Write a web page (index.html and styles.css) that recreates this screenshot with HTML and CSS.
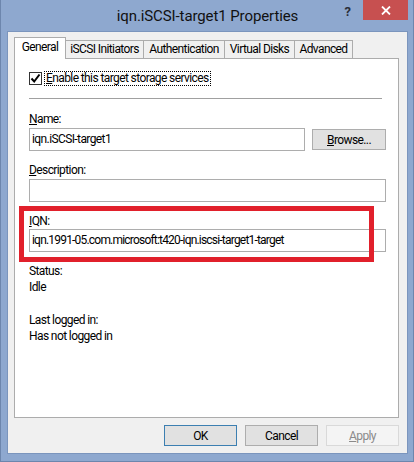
FILE: index.html
```html
<!DOCTYPE html>
<html lang="en">
<head>
  <meta charset="UTF-8" />
  <title>iqn.iSCSI-target1 Properties</title>
  <link rel="stylesheet" href="styles.css">
</head>
<body>
  <div class="window">
    <div class="titlebar">
      <span></span>
      <span class="title">iqn.iSCSI-target1 Properties</span>
      <div class="caption-buttons">
        <span class="help">?</span>
        <span class="close">
          <svg width="10" height="9" viewBox="0 0 10 9">
            <path d="M1 0.5 L9 8.5 M9 0.5 L1 8.5" stroke="#fff" stroke-width="1.8" fill="none" />
          </svg>
        </span>
      </div>
    </div>

    <div class="client">
      <!-- Abas -->
      <div class="tabs">
        <div class="tab active">General</div>
        <div class="tab w-initiators">iSCSI Initiators</div>
        <div class="tab w-auth">Authentication</div>
        <div class="tab w-disks">Virtual Disks</div>
        <div class="tab w-advanced">Advanced</div>
      </div>

      <div class="panel">
        <div class="check-row">
          <span class="checkbox">
            <svg width="11" height="11" viewBox="0 0 11 11">
              <path d="M1.5 5.5 L4.2 8.5 L9.5 1.5" stroke="#000" stroke-width="2" fill="none" />
            </svg>
          </span>
          <span class="focus-label"><u>E</u>nable this target storage services</span>
        </div>

        <div class="separator"></div>

        <div class="label first"><u>N</u>ame:</div>
        <div class="name-row">
          <div class="input name-input">iqn.iSCSI-target1</div>
          <button class="btn browse"><u>B</u>rowse...</button>
        </div>

        <div class="label"><u>D</u>escription:</div>
        <div class="input wide"></div>

        <div class="label"><u>I</u>QN:</div>
        <div class="input wide iqn">iqn.1991-05.com.microsoft:t420-iqn.iscsi-target1-target</div>

        <div class="info status">Status:</div>
        <div class="info">Idle</div>
        <div class="info last">Last logged in:</div>
        <div class="info">Has not logged in</div>

        <!-- destaque -->
        <div class="highlight"></div>
      </div>

      <div class="buttons">
        <button class="btn default">OK</button>
        <button class="btn">Cancel</button>
        <button class="btn disabled"><u>A</u>pply</button>
      </div>
    </div>
  </div>
</body>
</html>
```

FILE: styles.css
```css
body {
  margin: 0;
  font-family: Roboto, "Liberation Sans", sans-serif;
  font-size: 12px;
  letter-spacing: -0.6px;
  color: #000;
}

/* Janela */
.window {
  width: 414px;
  height: 462px;
  box-sizing: border-box;
  background: #8ea8cf;
  border: 1px solid #6d86ad;
  border-top: none;
  padding: 0 5px 7px 6px;
  display: flex;
  flex-direction: column;
}

.titlebar {
  height: 31px;
  flex-shrink: 0;
  display: grid;
  grid-template-columns: 1fr auto 1fr;
  align-items: start;
}

.title {
  font-size: 15px;
  letter-spacing: -0.1px;
  line-height: 20px;
  margin-top: 6px;
  color: #111;
}

.caption-buttons {
  display: flex;
  justify-content: flex-end;
  align-items: flex-start;
}

.help {
  font-weight: bold;
  font-size: 13px;
  letter-spacing: 0;
  line-height: 14px;
  margin-top: 5px;
  margin-right: 12px;
  color: #2a2f3a;
}

.close {
  width: 45px;
  height: 20px;
  background: #c75050;
  display: flex;
  justify-content: center;
  align-items: center;
}

/* Area cliente */
.client {
  flex: 1;
  background: #f0f0f0;
  border: 1px solid #7b95bd;
  padding: 5px 0 0 6px;
}

.tabs {
  display: flex;
  align-items: flex-end;
  height: 21px;
}

.tab {
  box-sizing: border-box;
  height: 18px;
  line-height: 17px;
  text-align: center;
  background: #f0f0f0;
  border: 1px solid #acacac;
  border-left: none;
  border-bottom: none;
  white-space: nowrap;
}

.tab.active {
  width: 52px;
  height: 22px;
  line-height: 19px;
  margin-bottom: -1px;
  background: #fff;
  border-left: 1px solid #acacac;
  position: relative;
  z-index: 1;
}

.w-initiators { width: 78px; }
.w-auth { width: 81px; }
.w-disks { width: 70px; }
.w-advanced { width: 58px; }

.panel {
  position: relative;
  width: 385px;
  height: 360px;
  box-sizing: border-box;
  background: #fff;
  border: 1px solid #acacac;
  padding: 12px 0 0 14px;
}

.check-row {
  display: flex;
  align-items: center;
  height: 15px;
}

.checkbox {
  width: 13px;
  height: 13px;
  box-sizing: border-box;
  border: 1px solid #333;
  background: #fff;
  display: flex;
  justify-content: center;
  align-items: center;
}

.focus-label {
  margin-left: 2px;
  padding: 0 1px;
  line-height: 13px;
  border: 1px dotted #000;
}

.separator {
  width: 353px;
  height: 1px;
  margin-top: 12px;
  background: #a0a0a0;
}

.label {
  line-height: 14px;
  margin-top: 12px;
}

.label.first {
  margin-top: 13px;
}

.name-row {
  display: flex;
  align-items: flex-start;
  margin-top: 2px;
}

.input {
  box-sizing: border-box;
  height: 23px;
  border: 1px solid #adadad;
  background: #fff;
  padding-left: 2px;
  line-height: 20px;
  white-space: nowrap;
}

.label + .input {
  margin-top: 2px;
}

.name-input {
  width: 276px;
}

.wide {
  width: 357px;
}

.iqn {
  margin-top: 1px !important;
  letter-spacing: -0.8px;
}

.btn {
  box-sizing: border-box;
  width: 73px;
  height: 21px;
  padding: 0;
  font-family: inherit;
  font-size: 12px;
  letter-spacing: -0.6px;
  color: #000;
  background: #e1e1e1;
  border: 1px solid #adadad;
}

.browse {
  width: 74px;
  margin-left: 7px;
  margin-top: 1px;
}

.info {
  line-height: 16px;
}

.info.status {
  margin-top: 11px;
}

.info.last {
  margin-top: 17px;
}

.highlight {
  position: absolute;
  left: 4px;
  top: 147px;
  width: 355px;
  height: 56px;
  box-sizing: border-box;
  border: 5px solid #e1202b;
}

.buttons {
  width: 385px;
  display: flex;
  justify-content: flex-end;
  gap: 8px;
  margin-top: 7px;
}

.btn.default {
  border-color: #3c7fb1;
}

.btn.disabled {
  background: #f4f4f4;
  border-color: #d9d9d9;
  color: #8a8a8a;
}
```
